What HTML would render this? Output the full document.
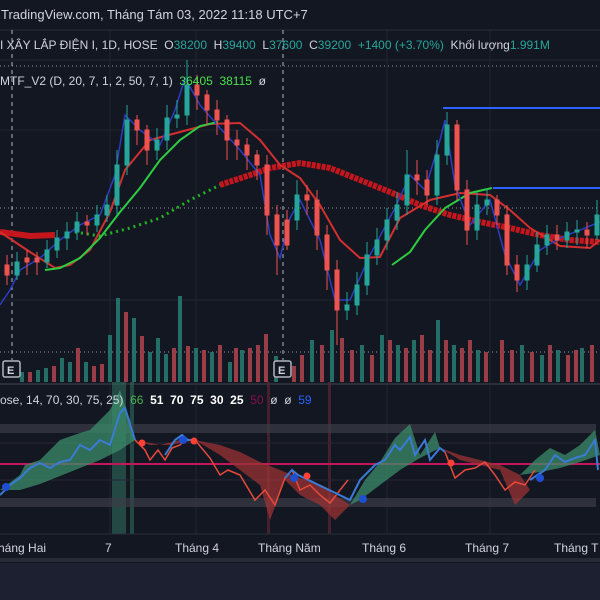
<!DOCTYPE html>
<html><head><meta charset="utf-8"><style>
body{margin:0;background:#131722;width:600px;height:600px;overflow:hidden;font-family:"Liberation Sans",sans-serif}
svg{display:block}
text{white-space:pre}
</style></head><body>
<svg width="600" height="600" viewBox="0 0 600 600" xmlns="http://www.w3.org/2000/svg" xml:space="preserve">
<rect width="600" height="600" fill="#131722"/>
<rect y="563" width="600" height="37" fill="#1c2030"/>
<rect y="558" width="600" height="4" fill="#262a36"/>
<g stroke="#1f2433" stroke-width="1">
<line x1="0" y1="60" x2="600" y2="60"/><line x1="0" y1="130" x2="600" y2="130"/><line x1="0" y1="300" x2="600" y2="300"/>
<line x1="110" y1="30" x2="110" y2="535"/><line x1="196" y1="30" x2="196" y2="535"/><line x1="387" y1="30" x2="387" y2="535"/><line x1="490" y1="30" x2="490" y2="535"/>
</g>
<line x1="0" y1="30" x2="600" y2="30" stroke="#2a2e39"/>
<line x1="0" y1="384" x2="600" y2="384" stroke="#2a2e39" stroke-width="2"/>
<line x1="0" y1="208" x2="600" y2="208" stroke="#9598a1" stroke-dasharray="1,3"/>
<line x1="0" y1="352" x2="600" y2="352" stroke="#9598a1" stroke-dasharray="1,3"/>
<line x1="0" y1="66" x2="600" y2="66" stroke="#9598a1" stroke-dasharray="1,3"/>
<line x1="12" y1="30" x2="12" y2="360" stroke="#b2b5be" stroke-dasharray="4,4"/>
<line x1="283" y1="30" x2="283" y2="360" stroke="#b2b5be" stroke-dasharray="4,4"/>
<g fill="#26786f" opacity="0.9">
<rect x="20" y="372" width="4" height="10"/><rect x="36" y="370" width="4" height="12"/><rect x="44" y="368" width="4" height="14"/><rect x="60" y="358" width="4" height="24"/><rect x="68" y="362" width="4" height="20"/><rect x="84" y="362" width="4" height="20"/><rect x="108" y="335" width="4" height="47"/><rect x="116" y="298" width="4" height="84"/><rect x="132" y="318" width="4" height="64"/><rect x="148" y="352" width="4" height="30"/><rect x="156" y="338" width="4" height="44"/><rect x="164" y="354" width="4" height="28"/><rect x="178" y="296" width="4" height="86"/><rect x="194" y="348" width="4" height="34"/><rect x="210" y="352" width="4" height="30"/><rect x="228" y="362" width="4" height="20"/><rect x="240" y="350" width="4" height="32"/><rect x="274" y="356" width="4" height="26"/><rect x="310" y="340" width="4" height="42"/><rect x="330" y="330" width="4" height="52"/><rect x="360" y="345" width="4" height="37"/><rect x="380" y="335" width="4" height="47"/><rect x="396" y="345" width="4" height="37"/><rect x="412" y="340" width="4" height="42"/><rect x="436" y="320" width="4" height="62"/><rect x="452" y="345" width="4" height="37"/><rect x="476" y="350" width="4" height="32"/><rect x="520" y="345" width="4" height="37"/><rect x="540" y="355" width="4" height="27"/><rect x="556" y="350" width="4" height="32"/><rect x="580" y="348" width="4" height="34"/>
</g>
<g fill="#a8434b" opacity="0.9">
<rect x="28" y="372" width="4" height="10"/><rect x="52" y="366" width="4" height="16"/><rect x="76" y="348" width="4" height="34"/><rect x="92" y="366" width="4" height="16"/><rect x="100" y="364" width="4" height="18"/><rect x="124" y="312" width="4" height="70"/><rect x="140" y="336" width="4" height="46"/><rect x="172" y="348" width="4" height="34"/><rect x="186" y="346" width="4" height="36"/><rect x="202" y="350" width="4" height="32"/><rect x="218" y="345" width="4" height="37"/><rect x="234" y="348" width="4" height="34"/><rect x="248" y="348" width="4" height="34"/><rect x="256" y="345" width="4" height="37"/><rect x="264" y="334" width="4" height="48"/><rect x="292" y="366" width="4" height="16"/><rect x="300" y="355" width="4" height="27"/><rect x="320" y="345" width="4" height="37"/><rect x="340" y="338" width="4" height="44"/><rect x="350" y="350" width="4" height="32"/><rect x="370" y="355" width="4" height="27"/><rect x="388" y="340" width="4" height="42"/><rect x="404" y="348" width="4" height="34"/><rect x="420" y="335" width="4" height="47"/><rect x="428" y="350" width="4" height="32"/><rect x="444" y="340" width="4" height="42"/><rect x="460" y="348" width="4" height="34"/><rect x="468" y="340" width="4" height="42"/><rect x="484" y="352" width="4" height="30"/><rect x="500" y="340" width="4" height="42"/><rect x="510" y="350" width="4" height="32"/><rect x="530" y="352" width="4" height="30"/><rect x="548" y="345" width="4" height="37"/><rect x="566" y="355" width="4" height="27"/><rect x="574" y="350" width="4" height="32"/><rect x="590" y="345" width="4" height="37"/>
</g>
<line x1="443" y1="108" x2="600" y2="108" stroke="#2962ff" stroke-width="2"/>
<line x1="493" y1="188" x2="600" y2="188" stroke="#2962ff" stroke-width="2"/>
<polyline fill="none" stroke="#c4161c" stroke-width="6" points="0,232 30,236 55,235"/>
<polyline fill="none" stroke="#c4161c" stroke-width="6" stroke-dasharray="4,1" points="220,185 250,175 270,168 300,163 330,168 360,180 390,192 420,205 450,215 480,222 510,228 540,235 570,240 600,242"/>
<polyline fill="none" stroke="#22b422" stroke-width="3" stroke-dasharray="2,4" points="75,232 100,236 130,228 160,218 190,200 220,185"/>
<polyline fill="none" stroke="#d32f2f" stroke-width="2" points="0,232 30,252 55,268 70,265 90,250 110,212 125,170 150,140 180,132 210,124 240,123 260,140 280,165 300,178 320,205 340,240 360,258 380,257 400,218 430,200 460,193 490,195 510,210 530,228 560,246 590,248 600,240"/>
<polyline fill="none" stroke="#2ecc40" stroke-width="2" points="45,270 60,268 80,258 100,238 120,212 140,188 160,160 180,140 200,126 218,122"/>
<polyline fill="none" stroke="#2ecc40" stroke-width="2" points="392,265 410,252 425,230 445,208 470,193 492,188"/>
<polyline fill="none" stroke="#2a3ebf" stroke-width="1.5" points="0,305 10,290 20,270 40,258 60,240 80,225 100,215 115,175 125,115 140,130 160,145 175,110 185,78 200,105 220,128 240,150 260,175 270,235 280,258 290,218 300,200 320,240 335,300 350,300 370,255 395,208 410,175 425,190 440,140 445,120 455,185 470,225 490,200 505,255 520,285 540,250 560,238 600,222"/>
<g fill="#26a69a" stroke="#26a69a">
<line x1="17" y1="252" x2="17" y2="280"/><rect x="15" y="262" width="4" height="13"/>
<line x1="47" y1="240" x2="47" y2="268"/><rect x="45" y="250" width="4" height="12"/>
<line x1="57" y1="230" x2="57" y2="258"/><rect x="55" y="238" width="4" height="12"/>
<line x1="67" y1="222" x2="67" y2="250"/><rect x="65" y="232" width="4" height="6"/>
<line x1="77" y1="212" x2="77" y2="240"/><rect x="75" y="222" width="4" height="10"/>
<line x1="97" y1="205" x2="97" y2="232"/><rect x="95" y="215" width="4" height="10"/>
<line x1="107" y1="195" x2="107" y2="222"/><rect x="105" y="205" width="4" height="10"/>
<line x1="117" y1="150" x2="117" y2="215"/><rect x="115" y="165" width="4" height="40"/>
<line x1="127" y1="105" x2="127" y2="175"/><rect x="125" y="120" width="4" height="45"/>
<line x1="157" y1="128" x2="157" y2="160"/><rect x="155" y="140" width="4" height="10"/>
<line x1="167" y1="105" x2="167" y2="150"/><rect x="165" y="118" width="4" height="22"/>
<line x1="177" y1="100" x2="177" y2="128"/><rect x="175" y="115" width="4" height="3"/>
<line x1="187" y1="60" x2="187" y2="125"/><rect x="185" y="85" width="4" height="30"/>
<line x1="297" y1="180" x2="297" y2="230"/><rect x="295" y="195" width="4" height="25"/>
<line x1="347" y1="292" x2="347" y2="320"/><rect x="345" y="305" width="4" height="5"/>
<line x1="357" y1="272" x2="357" y2="315"/><rect x="355" y="285" width="4" height="20"/>
<line x1="367" y1="242" x2="367" y2="295"/><rect x="365" y="255" width="4" height="30"/>
<line x1="377" y1="228" x2="377" y2="265"/><rect x="375" y="240" width="4" height="15"/>
<line x1="387" y1="208" x2="387" y2="250"/><rect x="385" y="220" width="4" height="20"/>
<line x1="397" y1="192" x2="397" y2="230"/><rect x="395" y="205" width="4" height="15"/>
<line x1="407" y1="150" x2="407" y2="215"/><rect x="405" y="175" width="4" height="30"/>
<line x1="437" y1="140" x2="437" y2="205"/><rect x="435" y="155" width="4" height="40"/>
<line x1="447" y1="112" x2="447" y2="165"/><rect x="445" y="125" width="4" height="30"/>
<line x1="477" y1="192" x2="477" y2="240"/><rect x="475" y="205" width="4" height="25"/>
<line x1="487" y1="188" x2="487" y2="215"/><rect x="485" y="200" width="4" height="5"/>
<line x1="527" y1="255" x2="527" y2="290"/><rect x="525" y="265" width="4" height="15"/>
<line x1="537" y1="232" x2="537" y2="272"/><rect x="535" y="245" width="4" height="20"/>
<line x1="547" y1="225" x2="547" y2="255"/><rect x="545" y="235" width="4" height="10"/>
<line x1="567" y1="222" x2="567" y2="248"/><rect x="565" y="232" width="4" height="8"/>
<line x1="577" y1="220" x2="577" y2="245"/><rect x="575" y="230" width="4" height="2"/>
<line x1="597" y1="200" x2="597" y2="240"/><rect x="595" y="215" width="4" height="20"/>
</g>
<g fill="#ef5350" stroke="#ef5350">
<line x1="7" y1="255" x2="7" y2="285"/><rect x="5" y="265" width="4" height="10"/>
<line x1="27" y1="250" x2="27" y2="275"/><rect x="25" y="258" width="4" height="4"/>
<line x1="37" y1="252" x2="37" y2="275"/><rect x="35" y="258" width="4" height="4"/>
<line x1="87" y1="215" x2="87" y2="235"/><rect x="85" y="222" width="4" height="3"/>
<line x1="137" y1="115" x2="137" y2="145"/><rect x="135" y="120" width="4" height="10"/>
<line x1="147" y1="125" x2="147" y2="165"/><rect x="145" y="130" width="4" height="20"/>
<line x1="197" y1="75" x2="197" y2="110"/><rect x="195" y="85" width="4" height="10"/>
<line x1="207" y1="90" x2="207" y2="125"/><rect x="205" y="95" width="4" height="15"/>
<line x1="217" y1="100" x2="217" y2="135"/><rect x="215" y="110" width="4" height="10"/>
<line x1="227" y1="115" x2="227" y2="160"/><rect x="225" y="120" width="4" height="20"/>
<line x1="237" y1="130" x2="237" y2="160"/><rect x="235" y="140" width="4" height="5"/>
<line x1="247" y1="138" x2="247" y2="170"/><rect x="245" y="145" width="4" height="10"/>
<line x1="257" y1="150" x2="257" y2="180"/><rect x="255" y="155" width="4" height="10"/>
<line x1="267" y1="155" x2="267" y2="235"/><rect x="265" y="165" width="4" height="50"/>
<line x1="277" y1="205" x2="277" y2="275"/><rect x="275" y="215" width="4" height="30"/>
<line x1="287" y1="210" x2="287" y2="250"/><rect x="285" y="220" width="4" height="25"/>
<line x1="307" y1="185" x2="307" y2="215"/><rect x="305" y="195" width="4" height="5"/>
<line x1="317" y1="190" x2="317" y2="250"/><rect x="315" y="200" width="4" height="35"/>
<line x1="327" y1="225" x2="327" y2="290"/><rect x="325" y="235" width="4" height="35"/>
<line x1="337" y1="260" x2="337" y2="345"/><rect x="335" y="270" width="4" height="40"/>
<line x1="417" y1="160" x2="417" y2="195"/><rect x="415" y="175" width="4" height="5"/>
<line x1="427" y1="170" x2="427" y2="205"/><rect x="425" y="180" width="4" height="15"/>
<line x1="457" y1="120" x2="457" y2="200"/><rect x="455" y="125" width="4" height="65"/>
<line x1="467" y1="180" x2="467" y2="245"/><rect x="465" y="190" width="4" height="40"/>
<line x1="497" y1="195" x2="497" y2="225"/><rect x="495" y="200" width="4" height="15"/>
<line x1="507" y1="205" x2="507" y2="275"/><rect x="505" y="215" width="4" height="50"/>
<line x1="517" y1="255" x2="517" y2="292"/><rect x="515" y="265" width="4" height="15"/>
<line x1="557" y1="225" x2="557" y2="250"/><rect x="555" y="235" width="4" height="5"/>
<line x1="587" y1="222" x2="587" y2="248"/><rect x="585" y="230" width="4" height="5"/>
</g>
<rect x="3" y="361" width="17" height="16" rx="2" fill="#131722" stroke="#b2b5be" stroke-width="1.5"/>
<text x="7" y="374" fill="#d1d4dc" font-size="11" font-weight="bold">E</text>
<rect x="274" y="361" width="17" height="16" rx="2" fill="#131722" stroke="#b2b5be" stroke-width="1.5"/>
<text x="278" y="374" fill="#d1d4dc" font-size="11" font-weight="bold">E</text>
<rect x="112" y="382" width="14" height="152" fill="#2f6b5d" opacity="0.6"/>
<rect x="130" y="382" width="4" height="152" fill="#2f6b5d" opacity="0.6"/>
<rect x="267" y="382" width="3" height="152" fill="#5a2630" opacity="0.7"/>
<rect x="328" y="382" width="3" height="152" fill="#5a2630" opacity="0.7"/>
<rect x="0" y="424" width="596" height="9" fill="#3a3d47" opacity="0.7"/>
<rect x="0" y="498" width="596" height="9" fill="#3a3d47" opacity="0.7"/>
<line x1="0" y1="443" x2="600" y2="443" stroke="#2a2438"/>
<line x1="0" y1="480" x2="600" y2="480" stroke="#2a2438"/>
<line x1="0" y1="464" x2="600" y2="464" stroke="#c2185b" stroke-width="2"/>
<line x1="0" y1="534" x2="600" y2="534" stroke="#2a2e39"/>
<polygon fill="#3c8c6a" opacity="0.75" points="0,490 20,475 25,465 40,460 60,440 80,433 90,430 100,420 110,410 120,390 130,420 135,440 120,450 100,460 80,468 60,476 40,484 20,490"/>
<polygon fill="#3c8c6a" opacity="0.75" points="350,505 365,480 380,462 395,438 410,424 420,455 435,432 440,448 420,458 400,470 380,485 360,500"/>
<polygon fill="#3c8c6a" opacity="0.75" points="520,475 535,460 550,448 565,455 580,445 595,430 600,455 580,462 560,468 540,472"/>
<polygon fill="#9b3333" opacity="0.75" points="135,440 160,445 180,440 195,440 220,455 240,470 260,485 270,520 285,480 300,495 320,505 335,520 350,505 335,495 320,485 300,478 280,470 260,462 240,452 220,445 195,440 170,445 150,445"/>
<polygon fill="#9b3333" opacity="0.75" points="440,448 460,460 480,465 500,470 515,505 530,490 520,475 500,465 480,460 460,455"/>
<polyline fill="none" stroke="#3a7bd5" stroke-width="2" points="0,495 10,485 20,478 30,468 40,463 50,468 60,462 70,460 80,445 90,450 100,440 110,445 120,413 125,408 135,440"/>
<polyline fill="none" stroke="#e64a3b" stroke-width="1.5" points="135,440 145,450 150,460 158,450 165,460 172,448 180,445 185,440 195,440 210,458 220,475 228,470 240,475 255,500 265,490 275,505 285,478 292,470 300,490 310,485 320,495 330,503 340,490 348,480"/>
<polyline fill="none" stroke="#3a7bd5" stroke-width="2" points="165,455 175,440 182,435 188,440 193,440"/>
<polyline fill="none" stroke="#3a7bd5" stroke-width="2" points="285,478 292,470 298,475 350,500 360,480 375,465 385,460 395,445 400,450 410,437 415,455 425,440 430,460 440,448 445,452"/>
<polyline fill="none" stroke="#e64a3b" stroke-width="1.5" points="445,452 455,478 465,470 475,468 485,462 495,475 505,490 515,482 525,485 535,470"/>
<polyline fill="none" stroke="#3a7bd5" stroke-width="2" points="530,480 545,470 555,455 565,462 575,458 585,455 595,440 598,470"/>
<g fill="#ff4136"><circle cx="142" cy="443" r="3.5"/><circle cx="194" cy="441" r="3.5"/><circle cx="307" cy="476" r="3.5"/><circle cx="451" cy="463" r="3.5"/></g>
<g fill="#1f4fd1"><circle cx="6" cy="487" r="4"/><circle cx="183" cy="440" r="4"/><circle cx="294" cy="478" r="4"/><circle cx="363" cy="499" r="4"/><circle cx="540" cy="478" r="4"/></g>
<text x="1" y="19" fill="#d1d4dc" font-size="13">TradingView.com, Tháng Tám 03, 2022 11:18 UTC+7</text>
<text x="0" y="49" font-size="12"><tspan fill="#d1d4dc">I XÂY LẮP ĐIỆN I, 1D, HOSE  O</tspan><tspan fill="#26a69a">38200</tspan><tspan fill="#d1d4dc">  H</tspan><tspan fill="#26a69a">39400</tspan><tspan fill="#d1d4dc">  L</tspan><tspan fill="#26a69a">37600</tspan><tspan fill="#d1d4dc">  C</tspan><tspan fill="#26a69a">39200  +1400 (+3.70%)</tspan><tspan fill="#d1d4dc">  Khối lượng</tspan><tspan fill="#26a69a">1.991M</tspan></text>
<text x="0" y="85" font-size="12"><tspan fill="#d1d4dc">MTF_V2 (D, 20, 7, 1, 2, 50, 7, 1)  </tspan><tspan fill="#4be04b">36405  38115</tspan><tspan fill="#d1d4dc">  ø</tspan></text>
<text x="0" y="404" font-size="12"><tspan fill="#d1d4dc">ose, 14, 70, 30, 75, 25)  </tspan><tspan fill="#4caf50">66</tspan><tspan fill="#ffffff" font-weight="bold">  51  70  75  30  25  </tspan><tspan fill="#880e4f">50</tspan><tspan fill="#d1d4dc">  ø  ø  </tspan><tspan fill="#2962ff">59</tspan></text>
<g fill="#d1d4dc" font-size="12">
<text x="-2" y="552">háng Hai</text><text x="105" y="552">7</text><text x="175" y="552">Tháng 4</text><text x="258" y="552">Tháng Năm</text><text x="362" y="552">Tháng 6</text><text x="465" y="552">Tháng 7</text><text x="554" y="552">Tháng T</text>
</g>
</svg>
</body></html>
